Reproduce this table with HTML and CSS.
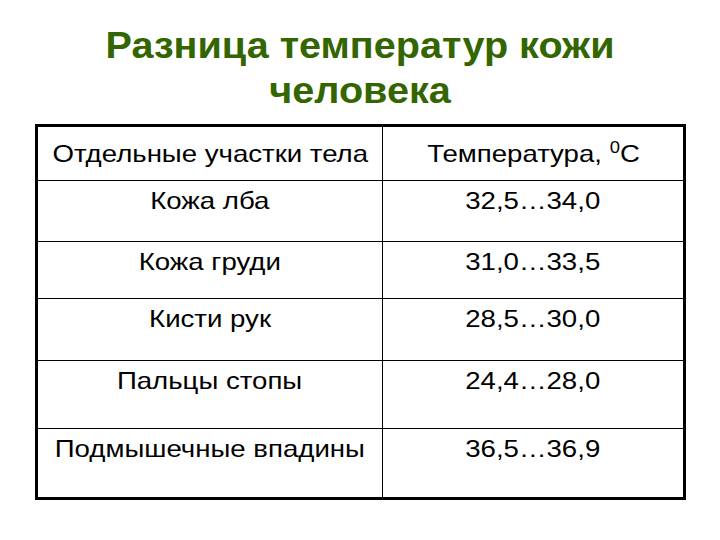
FILE: index.html
```html
<!DOCTYPE html>
<html lang="ru">
<head>
<meta charset="utf-8">
<title>Разница температур кожи человека</title>
<link rel="stylesheet" href="styles.css">
</head>
<body>
<div class="page">
  <h1 class="title">Разница температур кожи<br>человека</h1>
  <div class="table">
    <div class="cell head left"><span class="t">Отдельные участки тела</span></div>
    <div class="cell head"><span class="t">Температура, <sup class="deg">0</sup>C</span></div>
    <div class="cell left"><span class="t">Кожа лба</span></div>
    <div class="cell"><span class="t">32,5…34,0</span></div>
    <div class="cell left"><span class="t">Кожа груди</span></div>
    <div class="cell"><span class="t">31,0…33,5</span></div>
    <div class="cell left"><span class="t">Кисти рук</span></div>
    <div class="cell"><span class="t">28,5…30,0</span></div>
    <div class="cell left"><span class="t">Пальцы стопы</span></div>
    <div class="cell"><span class="t">24,4…28,0</span></div>
    <div class="cell left last"><span class="t">Подмышечные впадины</span></div>
    <div class="cell last"><span class="t">36,5…36,9</span></div>
  </div>
</div>
</body>
</html>
```
FILE: styles.css
```css
html, body {
  margin: 0;
  padding: 0;
  background: #ffffff;
}
.page {
  width: 720px;
  height: 540px;
  padding-top: 23px;
  box-sizing: border-box;
  font-family: "Liberation Sans", Arial, sans-serif;
  color: #000;
}
.title {
  margin: 0;
  font-size: 36px;
  line-height: 45px;
  font-weight: bold;
  color: #336600;
  text-align: center;
  transform: scaleX(1.1);
}
.table {
  margin-top: 11px;
  margin-left: 35px;
  display: grid;
  grid-template-columns: 345px 300px;
  grid-template-rows: 54px 61px 57px 62px 68px 68px;
  width: fit-content;
  border: 3px solid #000;
}
.cell {
  box-sizing: border-box;
  border-bottom: 1px solid #000;
  font-size: 24px;
  line-height: 28px;
  text-align: center;
  padding-top: 6px;
  white-space: nowrap;
}
.t {
  display: inline-block;
  transform: scaleX(1.15);
}
.cell.left {
  border-right: 1px solid #000;
}
.cell.head {
  padding-top: 0;
  display: flex;
  align-items: center;
  justify-content: center;
}
.cell.last {
  border-bottom: none;
}
.deg {
  font-size: 16px;
  line-height: 0;
  vertical-align: 9px;
}
```
